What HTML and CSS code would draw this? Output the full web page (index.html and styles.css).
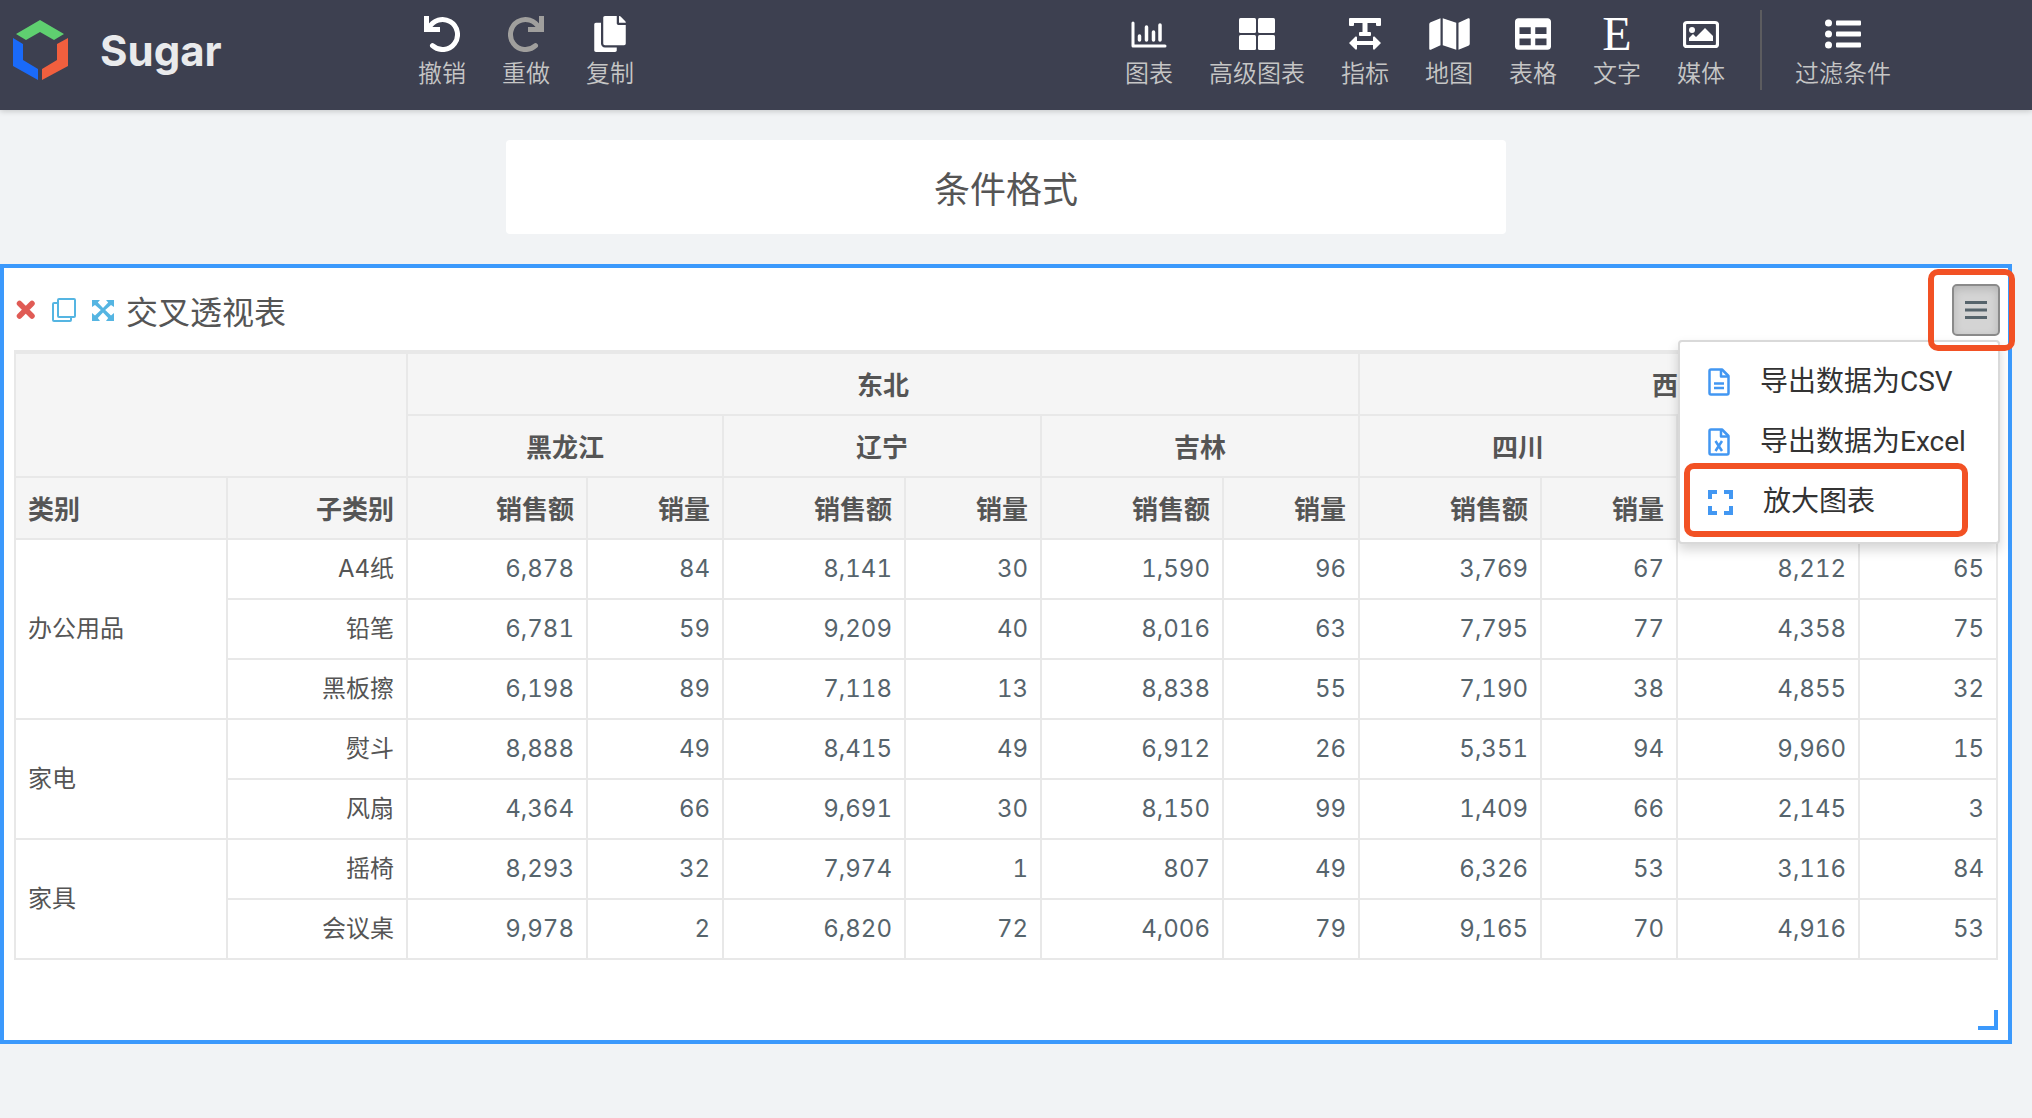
FILE: index.html
```html
<!DOCTYPE html>
<html lang="zh-CN">
<head>
  <meta charset="UTF-8">
  <meta name="viewport" content="width=device-width, initial-scale=1.0">
  <title>Sugar</title>
  <link rel="stylesheet" href="styles.css">
</head>
<body>

  <header class="topbar">
    <a href="#" class="brand">
      <svg class="logo" viewBox="0 0 55 60" aria-hidden="true">
        <path fill="#5fcf70" d="M27 0 51 14 41 20 27 12 13 20 3 14Z"/>
        <path fill="#1a6af9" d="M0 18 10 24V40L25 49V60L0 46Z"/>
        <path fill="#f15f3e" d="M55 18 44 24V40L29 49V60L55 46Z"/>
      </svg>
      <span>Sugar</span>
    </a>

    <!-- Edit -->
    <nav class="tools">
      <button type="button" class="tool">
        <svg width="36" height="36" viewBox="0 0 36 36" aria-hidden="true"><path fill="none" stroke="#fff" stroke-width="5" stroke-linecap="round" d="M5 12A15 15 0 1 1 8.500 29.700"/><path fill="#fff" d="M0 0H5V9L7 11H16V16H0Z"/></svg>
        <span>撤销</span>
      </button>
      <button type="button" class="tool disabled" disabled>
        <svg width="36" height="36" viewBox="0 0 36 36" aria-hidden="true"><path fill="none" stroke="currentColor" stroke-width="5" stroke-linecap="round" d="M31 12A15 15 0 1 0 27.500 29.700"/><path fill="currentColor" d="M36 0H31V9L29 11H20V16H36Z"/></svg>
        <span>重做</span>
      </button>
      <button type="button" class="tool">
        <svg width="32" height="36" viewBox="0 0 448 512" aria-hidden="true"><path fill="#fff" d="M320 448v40c0 13.300-10.700 24-24 24H24c-13.300 0-24-10.700-24-24V120c0-13.300 10.700-24 24-24h72v296c0 30.900 25.100 56 56 56h168zm0-344V0H152c-13.300 0-24 10.700-24 24v368c0 13.300 10.700 24 24 24h272c13.300 0 24-10.700 24-24V128H344c-13.200 0-24-10.800-24-24zm121-31L375 7A24 24 0 0 0 358.100 0H352v96h96v-6.100a24 24 0 0 0-7-16.900z"/></svg>
        <span>复制</span>
      </button>
    </nav>

    <!-- Insert -->
    <nav class="tools tools-insert">
      <button type="button" class="tool">
        <svg width="36" height="36" viewBox="0 0 36 36" aria-hidden="true"><g fill="none" stroke="#fff" stroke-width="3" stroke-linecap="round"><path d="M2 7V30H34" stroke-linejoin="round"/><path stroke-width="3.500" d="M8.500 20V24M15.500 11V24M22.500 16V24M29 9V24"/></g></svg>
        <span>图表</span>
      </button>
      <button type="button" class="tool">
        <svg width="36" height="36" viewBox="0 0 36 36" aria-hidden="true"><g fill="#fff"><rect y="2" width="17" height="15" rx="1.500"/><rect x="19" y="2" width="17" height="15" rx="1.500"/><rect y="19" width="17" height="15" rx="1.500"/><rect x="19" y="19" width="17" height="15" rx="1.500"/></g></svg>
        <span>高级图表</span>
      </button>
      <button type="button" class="tool">
        <svg width="32" height="36" viewBox="0 0 32 36" aria-hidden="true"><path fill="#fff" d="M1 2H31Q32 2 32 3V9Q32 10 31 10H28Q27 10 27 9V7H18.500V16H21Q22 16 22 17V19Q22 20 21 20H11Q10 20 10 19V17Q10 16 11 16H13.500V7H5V9Q5 10 4 10H1Q0 10 0 9V3Q0 2 1 2ZM0 27 6.500 20.500Q8 20 8 21.500V25H24V21.500Q24 20 25.500 20.500L32 27 25.500 33.500Q24 34 24 32.500V29H8V32.500Q8 34 6.500 33.500Z"/></svg>
        <span>指标</span>
      </button>
      <button type="button" class="tool">
        <svg width="41" height="36" viewBox="0 0 576 512" aria-hidden="true"><path fill="#fff" d="M0 117.700V464c0 11.300 11.400 19.100 21.900 14.900L160 416V32L20.100 88A32 32 0 0 0 0 117.700zM192 416l192 64V96L192 32v384zM554.100 33.200 416 96v384l139.900-56A32 32 0 0 0 576 394.300V48c0-11.300-11.400-19.100-21.900-14.800z"/></svg>
        <span>地图</span>
      </button>
      <button type="button" class="tool">
        <svg width="36" height="36" viewBox="0 0 512 512" aria-hidden="true"><path fill="#fff" d="M464 32H48C21.500 32 0 53.500 0 80v352c0 26.500 21.500 48 48 48h416c26.500 0 48-21.500 48-48V80c0-26.500-21.500-48-48-48zM224 416H64v-96h160v96zm0-160H64v-96h160v96zm224 160H288v-96h160v96zm0-160H288v-96h160v96z"/></svg>
        <span>表格</span>
      </button>
      <button type="button" class="tool">
        <b class="letter" aria-hidden="true">E</b>
        <span>文字</span>
      </button>
      <button type="button" class="tool">
        <svg width="36" height="36" viewBox="0 0 36 36" aria-hidden="true"><rect x="1.500" y="6.500" width="33" height="24" rx="2.500" fill="none" stroke="#fff" stroke-width="3.200"/><circle cx="9" cy="14" r="3" fill="#fff"/><path fill="#fff" d="M6 25V22L10 18 13 21 22 12 30 20V25Z"/></svg>
        <span>媒体</span>
      </button>
      <i class="divider"></i>
      <button type="button" class="tool">
        <svg width="36" height="36" viewBox="0 0 36 36" aria-hidden="true"><g fill="#fff"><circle cx="3.500" cy="7" r="3.500"/><circle cx="3.500" cy="18" r="3.500"/><circle cx="3.500" cy="29" r="3.500"/><rect x="11" y="4.500" width="25" height="5" rx="1"/><rect x="11" y="15.500" width="25" height="5" rx="1"/><rect x="11" y="26.500" width="25" height="5" rx="1"/></g></svg>
        <span>过滤条件</span>
      </button>
    </nav>
  </header>

  <main class="canvas">
    <h1 class="title-card">条件格式</h1>

    <section class="panel">
      <div class="panel-head">
        <div class="panel-tools">
          <button type="button" aria-label="删除">
            <svg width="20" height="20" viewBox="0 0 20 20"><path stroke="#e05b55" stroke-width="5.500" stroke-linecap="round" d="M3.500 3.500 16 16M16 3.500 3.500 16"/></svg>
          </button>
          <button type="button" aria-label="复制">
            <svg width="24" height="24" viewBox="0 0 24 24"><g fill="none" stroke="#55b5e2" stroke-width="2" stroke-linejoin="round"><rect x="6" y="1" width="17" height="18" rx="1"/><path d="M6 5H2Q1 5 1 6V22Q1 23 2 23H18Q19 23 19 22V19"/></g></svg>
          </button>
          <button type="button" aria-label="全屏">
            <svg width="22" height="22" viewBox="0 0 22 22"><path fill="#55b5e2" d="M0 1H8L5.800 3.500 11 9 16.200 3.500 14 1H22V8L19 6 13.200 11 19 16.500 22 14V22H14L16.200 19 11 13.500 5.800 19 8 22H0V14L3 16.500 8.800 11 3 6 0 8Z"/></svg>
          </button>
        </div>
        <h2>交叉透视表</h2>

        <div class="menu-wrap">
          <button type="button" class="menu-btn" aria-label="菜单">
            <svg width="22" height="20" viewBox="0 0 22 20"><path stroke="#56646c" stroke-width="3" d="M0 2.500H22M0 10H22M0 17.500H22"/></svg>
          </button>
          <ul class="menu">
            <li><button type="button">
              <svg width="22" height="28" viewBox="0 0 22 28"><g fill="none" stroke="#4297f2" stroke-width="2.500" stroke-linejoin="round"><path d="M3 1.500H14L20.500 8V25Q20.500 26.500 19 26.500H3Q1.500 26.500 1.500 25V3Q1.500 1.500 3 1.500Z"/><path d="M13 2V8.500H20M6 15.500H16M6 20H16"/></g></svg>
              导出数据为CSV</button></li>
            <li><button type="button">
              <svg width="22" height="28" viewBox="0 0 22 28"><g fill="none" stroke="#4297f2" stroke-width="2.500" stroke-linejoin="round"><path d="M3 1.500H14L20.500 8V25Q20.500 26.500 19 26.500H3Q1.500 26.500 1.500 25V3Q1.500 1.500 3 1.500Z"/><path d="M13 2V8.500H20M7.500 13 14 23M14 13 7.500 23"/></g></svg>
              导出数据为Excel</button></li>
            <li class="marked"><button type="button">
              <svg width="25" height="28" viewBox="0 0 25 28"><path fill="none" stroke="#4297f2" stroke-width="4" d="M9 4H2V11M16 4H23V11M9 25H2V18M16 25H23V18"/></svg>
              放大图表</button></li>
          </ul>
        </div>
      </div>

      <table class="pivot">
        <colgroup>
          <col class="c-cat"><col class="c-sub">
          <col class="c-sub"><col class="c-qty">
          <col class="c-amt"><col class="c-qty">
          <col class="c-amt"><col class="c-qty">
          <col class="c-amt"><col class="c-qty">
          <col class="c-amt"><col>
        </colgroup>
        <thead>
          <tr><td colspan="2" rowspan="2"></td><th colspan="6">东北</th><th colspan="4">西南</th></tr>
          <tr><th colspan="2">黑龙江</th><th colspan="2">辽宁</th><th colspan="2">吉林</th><th colspan="2">四川</th><th colspan="2">重庆</th></tr>
          <tr class="fields"><th class="left">类别</th><th>子类别</th><th>销售额</th><th>销量</th><th>销售额</th><th>销量</th><th>销售额</th><th>销量</th><th>销售额</th><th>销量</th><th>销售额</th><th>销量</th></tr>
        </thead>
        <tbody>
          <tr><th class="left" rowspan="3">办公用品</th><th>A4纸</th><td>6,878</td><td>84</td><td>8,141</td><td>30</td><td>1,590</td><td>96</td><td>3,769</td><td>67</td><td>8,212</td><td>65</td></tr>
          <tr><th>铅笔</th><td>6,781</td><td>59</td><td>9,209</td><td>40</td><td>8,016</td><td>63</td><td>7,795</td><td>77</td><td>4,358</td><td>75</td></tr>
          <tr><th>黑板擦</th><td>6,198</td><td>89</td><td>7,118</td><td>13</td><td>8,838</td><td>55</td><td>7,190</td><td>38</td><td>4,855</td><td>32</td></tr>
          <tr><th class="left" rowspan="2">家电</th><th>熨斗</th><td>8,888</td><td>49</td><td>8,415</td><td>49</td><td>6,912</td><td>26</td><td>5,351</td><td>94</td><td>9,960</td><td>15</td></tr>
          <tr><th>风扇</th><td>4,364</td><td>66</td><td>9,691</td><td>30</td><td>8,150</td><td>99</td><td>1,409</td><td>66</td><td>2,145</td><td>3</td></tr>
          <tr><th class="left" rowspan="2">家具</th><th>摇椅</th><td>8,293</td><td>32</td><td>7,974</td><td>1</td><td>807</td><td>49</td><td>6,326</td><td>53</td><td>3,116</td><td>84</td></tr>
          <tr><th>会议桌</th><td>9,978</td><td>2</td><td>6,820</td><td>72</td><td>4,006</td><td>79</td><td>9,165</td><td>70</td><td>4,916</td><td>53</td></tr>
        </tbody>
      </table>
      <span class="resize"></span>
    </section>
  </main>

</body>
</html>
```

FILE: styles.css
```css
* {
  box-sizing: border-box;
}

body {
  margin: 0;
  min-height: 100vh;
  background-color: #f1f3f5;
  color: #555;
  font-family: Inter, "Noto Sans CJK SC", sans-serif;
}

button {
  padding: 0;
  border: none;
  background: none;
  color: inherit;
  font: inherit;
  cursor: pointer;
}

h1, h2 {
  margin: 0;
  font-weight: normal;
}

svg {
  display: block;
}

/* Top bar */
.topbar {
  display: flex;
  height: 110px;
  padding: 0 123px 0 13px;
  background-color: #3d4050;
  box-shadow: 0 1px 6px rgba(0, 0, 0, 0.2);
}

.brand {
  display: flex;
  align-items: center;
  gap: 32px;
  width: 387px;
  padding-bottom: 10px;
  color: #e9eaec;
  font-size: 42px;
  font-weight: 700;
  text-decoration: none;
}

.logo {
  width: 55px;
  height: 60px;
}

.tools {
  display: flex;
  align-items: flex-start;
}

.tools-insert {
  margin-left: auto;
}

.tool {
  display: flex;
  flex-direction: column;
  align-items: center;
  gap: 2px;
  padding: 16px 18px 0;
  color: #c6c6c6;
  font-family: "Noto Sans CJK SC", sans-serif;
  font-size: 24px;
  font-weight: 350;
  line-height: 36px;
}

.tool.disabled svg {
  color: #a09f9d;
}

.letter {
  height: 36px;
  color: #fff;
  font-family: "Liberation Serif", serif;
  font-size: 48px;
  font-weight: normal;
  line-height: 36px;
}

.divider {
  width: 2px;
  height: 80px;
  margin: 10px 15px 0 17px;
  background-color: #5c5c5f;
}

/* Canvas */
.canvas {
  padding: 30px 20px 0 0;
}

.title-card {
  width: calc(50% - 6px);
  margin: 0 auto 30px;
  padding: 20px 0;
  border-radius: 4px;
  background-color: #fff;
  font-family: "Noto Sans CJK SC", sans-serif;
  font-size: 36px;
  line-height: 54px;
  text-align: center;
}

.panel {
  position: relative;
  padding: 0 10px 80px;
  border: 4px solid #3b99fc;
  background-color: #fff;
}

.panel-head {
  display: flex;
  align-items: center;
  gap: 12px;
  height: 82px;
  padding: 2px 0 0 2px;
}

.panel-tools {
  display: flex;
  align-items: center;
  gap: 16px;
}

.panel-head h2 {
  font-family: "Noto Sans CJK SC", sans-serif;
  font-size: 32px;
  line-height: 48px;
}

.menu-wrap {
  position: relative;
  margin: 0 -2px 0 auto;
}

/* Red callout frames */
.menu-wrap::before,
.marked::before {
  content: "";
  position: absolute;
  z-index: 3;
  border: 6px solid #f25124;
  border-radius: 10px;
  pointer-events: none;
}

.menu-wrap::before {
  inset: -15px -15px -15px -24px;
}

.marked::before {
  inset: -9px 30px -5px 4px;
}

.menu-btn {
  display: flex;
  align-items: center;
  justify-content: center;
  width: 48px;
  height: 52px;
  border: 2px solid #8a8a8a;
  border-radius: 5px;
  background-color: #d4d4d4;
  box-shadow: inset 0 3px 8px rgba(0, 0, 0, 0.15);
}

.menu {
  position: absolute;
  z-index: 2;
  top: 56px;
  right: 0;
  width: 322px;
  margin: 0;
  padding: 10px 0;
  border: 2px solid #d9d9d9;
  border-radius: 4px;
  background-color: #fff;
  box-shadow: 0 6px 12px rgba(0, 0, 0, 0.16);
  list-style: none;
}

.menu li {
  position: relative;
}

.menu button {
  display: flex;
  align-items: center;
  gap: 30px;
  width: 100%;
  height: 60px;
  padding-left: 28px;
  color: #333;
  font-family: Roboto, "Noto Sans CJK SC", sans-serif;
  font-size: 28px;
  line-height: 40px;
  white-space: nowrap;
}

/* Pivot table */
.pivot {
  width: 100%;
  border-top: 4px solid #e8e8e8;
  border-left: 2px solid #e8e8e8;
  border-spacing: 0;
  table-layout: fixed;
}

.c-cat {
  width: 212px;
}

.c-sub {
  width: 180px;
}

.c-amt {
  width: 182px;
}

.c-qty {
  width: 136px;
}

.pivot th,
.pivot td {
  height: 60px;
  padding: 0 12px;
  border-right: 2px solid #e8e8e8;
  border-bottom: 2px solid #e8e8e8;
  line-height: 36px;
  text-align: right;
}

.pivot thead th,
.pivot thead td {
  height: 62px;
  background-color: #f5f5f5;
  font-family: "Noto Sans CJK SC", sans-serif;
  font-size: 26px;
  font-weight: 600;
  text-align: center;
}

.pivot thead .fields th {
  text-align: right;
}

.pivot tbody th {
  font-size: 24px;
  font-weight: normal;
}

.pivot tbody td {
  color: #56646c;
  font-size: 24px;
  font-variant-numeric: tabular-nums;
}

.pivot .left,
.pivot thead .fields .left {
  text-align: left;
}

/* Resize handle */
.resize {
  position: absolute;
  right: 10px;
  bottom: 10px;
  width: 20px;
  height: 20px;
  border: solid #3b99fc;
  border-width: 0 4px 4px 0;
  cursor: nwse-resize;
}
```
